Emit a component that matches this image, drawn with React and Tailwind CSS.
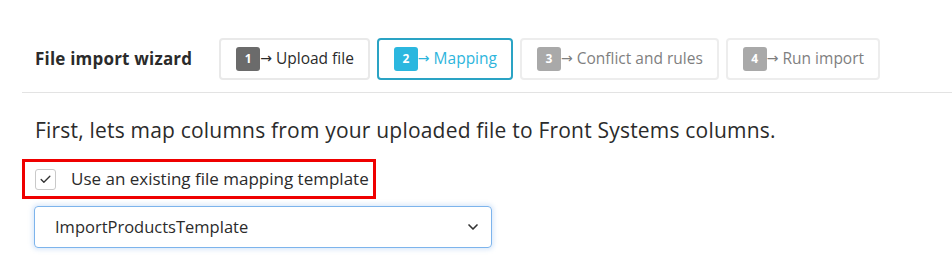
import { Check, ChevronDown } from 'lucide-react'

const steps = [
  { n: 1, label: 'Upload file', state: 'done' },
  { n: 2, label: 'Mapping', state: 'active' },
  { n: 3, label: 'Conflict and rules', state: 'todo' },
  { n: 4, label: 'Run import', state: 'todo' },
]

function Step({ n, label, state }) {
  const box =
    state === 'active'
      ? 'border-[#2aa3c4] text-[#2eb5dc]'
      : state === 'done'
        ? 'border-[#e9e9e9] text-[#2b2b2b]'
        : 'border-[#ededed] text-[#7f7f7f]'
  const badge =
    state === 'active' ? 'bg-[#2bb7df]' : state === 'done' ? 'bg-[#6b6b6b]' : 'bg-[#a9a9a9]'
  return (
    <div className={`h-[42px] flex items-center pl-[15px] pr-[14px] border-2 rounded-[4px] bg-white ${box}`}>
      <span
        className={`w-[24px] h-[24px] rounded-[3px] flex items-center justify-center text-white text-[12px] font-bold ${badge}`}
      >
        {n}
      </span>
      <span className="font-['DejaVu_Sans',sans-serif] text-[14px] mr-[4px] -translate-y-[1px]">→</span>
      <span className="text-[15.5px]">{label}</span>
    </div>
  )
}

export default function App() {
  return (
    <div className="w-[952px] h-[263px] bg-white font-['Open_Sans',sans-serif] text-[#2b2b2b] overflow-hidden">
      <div className="ml-[22px]">
        <div className="flex items-center pt-[38px] pb-[12px] pl-[13px] border-b border-[#e3e3e3]">
          <h1 className="text-[17px] font-bold text-[#2b2b2b] mr-[27px] tracking-[0.2px]">File import wizard</h1>
          <div className="flex gap-[7px]">
            {steps.map((s) => (
              <Step key={s.n} {...s} />
            ))}
          </div>
        </div>

        <p className="mt-[22px] pl-[13px] text-[21px] leading-[30px] tracking-[0.2px] whitespace-nowrap">
          First, lets map columns from your uploaded file to Front Systems columns.
        </p>

        <div className="mt-[14px] w-[354px] h-[40px] border-[3px] border-[#ef0000] flex items-center pl-[10px]">
          <span className="w-[21px] h-[21px] rounded-[3px] border border-[#c9c9c9] flex items-center justify-center">
            <Check size={13} strokeWidth={2.5} className="text-[#333]" />
          </span>
          <span className="ml-[15px] text-[17px] whitespace-nowrap">Use an existing file mapping template</span>
        </div>

        <div className="mt-[7px] ml-[12px] w-[458px] h-[42px] rounded-[4px] border border-[#7db4ec] shadow-[0_0_4px_2px_rgba(120,170,235,0.25)] flex items-center justify-between pl-[20px] pr-[10px]">
          <span className="text-[16.5px]">ImportProductsTemplate</span>
          <ChevronDown size={16} strokeWidth={2.5} className="text-[#333]" />
        </div>
      </div>
    </div>
  )
}
